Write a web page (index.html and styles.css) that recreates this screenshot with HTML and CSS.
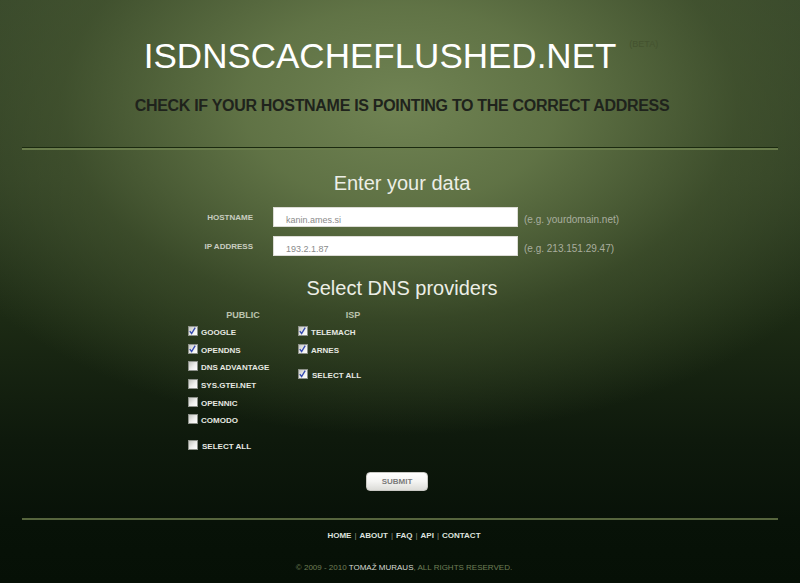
FILE: index.html
```html
<!DOCTYPE html>
<html lang="en">
<head>
<meta charset="utf-8">
<title>isDNScacheFlushed.net</title>
<link rel="stylesheet" href="styles.css">
</head>
<body>
<header class="header">
  <h1 class="title">ISDNSCACHEFLUSHED.NET<span class="beta">(BETA)</span></h1>
  <p class="tagline">CHECK IF YOUR HOSTNAME IS POINTING TO THE CORRECT ADDRESS</p>
</header>
<div class="rule"></div>
<main class="main">
  <h2 class="heading">Enter your data</h2>
  <div class="content fields">
    <div class="field">
      <label class="field-label">HOSTNAME</label>
      <div class="input">kanin.ames.si</div>
      <span class="hint">(e.g. yourdomain.net)</span>
    </div>
    <div class="field">
      <label class="field-label">IP ADDRESS</label>
      <div class="input">193.2.1.87</div>
      <span class="hint">(e.g. 213.151.29.47)</span>
    </div>
  </div>
  <h2 class="heading heading-dns">Select DNS providers</h2>
  <div class="content providers">
    <div class="col">
      <div class="col-title">PUBLIC</div>
      <div class="opt"><span class="cb on"><svg viewBox="0 0 10 10"><path d="M2 5.2 L4 7.8 L8 1.2"/></svg></span>GOOGLE</div>
      <div class="opt"><span class="cb on"><svg viewBox="0 0 10 10"><path d="M2 5.2 L4 7.8 L8 1.2"/></svg></span>OPENDNS</div>
      <div class="opt"><span class="cb"></span>DNS ADVANTAGE</div>
      <div class="opt"><span class="cb"></span>SYS.GTEI.NET</div>
      <div class="opt"><span class="cb"></span>OPENNIC</div>
      <div class="opt"><span class="cb"></span>COMODO</div>
      <div class="opt opt-all"><span class="cb"></span>SELECT ALL</div>
    </div>
    <div class="col">
      <div class="col-title">ISP</div>
      <div class="opt"><span class="cb on"><svg viewBox="0 0 10 10"><path d="M2 5.2 L4 7.8 L8 1.2"/></svg></span>TELEMACH</div>
      <div class="opt"><span class="cb on"><svg viewBox="0 0 10 10"><path d="M2 5.2 L4 7.8 L8 1.2"/></svg></span>ARNES</div>
      <div class="opt opt-all"><span class="cb on"><svg viewBox="0 0 10 10"><path d="M2 5.2 L4 7.8 L8 1.2"/></svg></span>SELECT ALL</div>
    </div>
  </div>
  <div class="actions"><button class="submit" type="button">SUBMIT</button></div>
</main>
<div class="rule rule-foot"></div>
<footer class="footer">
  <nav class="nav"><a>HOME</a><span class="sep">|</span><a>ABOUT</a><span class="sep">|</span><a>FAQ</a><span class="sep">|</span><a>API</a><span class="sep">|</span><a>CONTACT</a></nav>
  <p class="copy">© 2009 - 2010 <span class="author">TOMAŽ MURAUS</span>, ALL RIGHTS RESERVED.</p>
</footer>
</body>
</html>
```

FILE: styles.css
```css
html, body {
  margin: 0;
  padding: 0;
  height: 100%;
}
body {
  font-family: "Liberation Sans", Arial, sans-serif;
  color: #fff;
  overflow: hidden;
  background:
    radial-gradient(ellipse 520px 330px at 50% 105px, rgba(112,131,83,1) 0%, rgba(100,119,72,0.92) 30%, rgba(72,89,50,0.6) 65%, rgba(40,56,28,0) 100%),
    linear-gradient(to bottom, #36462a 0px, #2d3c22 180px, #1c2a14 320px, #0e190c 440px, #081208 520px, #061006 583px);
}
.header {
  padding-top: 36px;
  text-align: center;
}
.title {
  margin: 0;
  font-size: 35px;
  line-height: 40px;
  font-weight: normal;
  color: #fff;
  padding-left: 2px;
}
.beta {
  font-size: 9px;
  line-height: 10px;
  vertical-align: top;
  color: #44522f;
  margin-left: 13px;
  position: relative;
  top: 3px;
}
.tagline {
  margin: 20px 0 0;
  font-size: 16px;
  line-height: 20px;
  font-weight: bold;
  letter-spacing: -0.3px;
  color: #1f231c;
  padding-left: 4px;
}
.rule {
  margin: 31px 22px 0;
  height: 1px;
  background: #1b2a10;
  border-bottom: 2px solid #697c4b;
}
.main {
  padding-top: 21px;
}
.heading {
  margin: 0;
  text-align: center;
  font-size: 20px;
  line-height: 24px;
  font-weight: normal;
  color: #eceee6;
  padding-left: 4px;
}
.content {
  width: 424px;
  margin: 0 auto;
}
.fields {
  padding-top: 12px;
}
.field {
  display: flex;
  align-items: center;
  height: 20px;
}
.field + .field {
  margin-top: 9px;
}
.field-label {
  flex: none;
  width: 65px;
  text-align: right;
  font-size: 8px;
  font-weight: bold;
  color: #c9cdc1;
  margin-right: 20px;
}
.input {
  flex: none;
  box-sizing: border-box;
  width: 245px;
  height: 20px;
  background: #fff;
  border: 1px solid #dcdcd6;
  padding: 6px 0 0 12px;
  font-size: 9px;
  line-height: 12px;
  color: #8a8a8a;
}
.hint {
  flex: none;
  margin-left: 6px;
  white-space: nowrap;
  font-size: 10px;
  color: #a9ae9f;
  position: relative;
  top: 2px;
}
.heading-dns {
  margin-top: 20px;
}
.providers {
  display: grid;
  grid-template-columns: 110px 110px 1fr;
  padding-top: 9px;
}
.col-title {
  text-align: center;
  font-size: 9px;
  font-weight: bold;
  line-height: 12px;
  color: #bcc4ae;
  margin-bottom: 3px;
}
.opt {
  display: flex;
  align-items: center;
  height: 17.6px;
  font-size: 8px;
  font-weight: bold;
  color: #e6e8e2;
  white-space: nowrap;
}
.opt-all {
  margin-top: 8px;
}
.cb {
  box-sizing: border-box;
  width: 10px;
  height: 10px;
  margin-right: 3px;
  margin-bottom: 3px;
  border: 1px solid #8d918a;
  background: linear-gradient(135deg, #c4c5c0 0%, #eeeeec 55%, #ffffff 100%);
  display: flex;
  flex: none;
}
.opt-all .cb {
  margin-right: 4px;
}
.cb svg {
  width: 10px;
  height: 10px;
  margin: -1px 0 0 -1px;
}
.cb svg path {
  fill: none;
  stroke: #3349b0;
  stroke-width: 1.5;
}
.actions {
  display: flex;
  justify-content: center;
  padding: 17px 6px 0 0;
}
.submit {
  box-sizing: border-box;
  width: 62px;
  height: 19px;
  padding: 0;
  border: 1px solid #c9c9c4;
  border-radius: 4px;
  background: linear-gradient(to bottom, #ffffff 0%, #f4f4f2 50%, #dcdcd8 100%);
  font-family: "Liberation Sans", Arial, sans-serif;
  font-size: 8px;
  font-weight: bold;
  color: #7a7a7a;
}
.rule-foot {
  margin-top: 27px;
  height: 0;
  background: none;
  border-bottom: 2px solid #56653d;
}
.footer {
  text-align: center;
  padding-top: 10px;
}
.nav {
  font-size: 8px;
  line-height: 12px;
  font-weight: bold;
  color: #dde0dd;
  padding-left: 8px;
}
.nav a {
  color: #dfe2df;
}
.sep {
  color: #8a907f;
  font-weight: normal;
  margin: 0 3px;
}
.copy {
  margin: 20px 0 0;
  font-size: 8px;
  line-height: 12px;
  color: #6f7e56;
  padding-left: 8px;
}
.author {
  color: #d9dcd5;
}
```
